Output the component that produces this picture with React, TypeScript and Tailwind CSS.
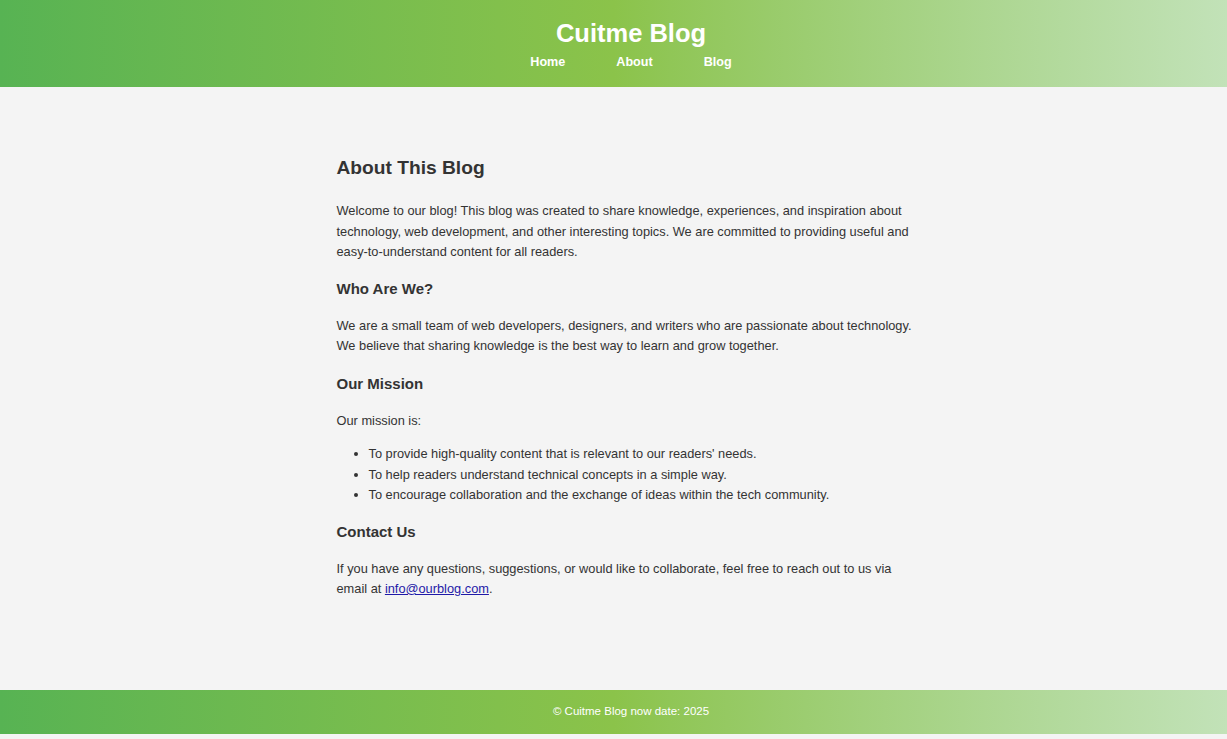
export default function App() {
  return (
    <div className="min-h-[739px] bg-[#f4f4f4] text-[#333] font-['Liberation_Sans',Arial,sans-serif]">
      {/* Header */}
      <header className="h-[87px] bg-linear-to-r from-[#57b353] via-[#8bc34a] to-[#c2e2b8] text-white flex flex-col items-center pt-[17px] pl-[35px]">
        <h1 className="text-[25.5px] font-bold leading-[32px]">Cuitme Blog</h1>
        <nav className="flex gap-[51px] mt-[5px] text-[12.6px] font-bold leading-[16px]">
          <a href="#">Home</a>
          <a href="#">About</a>
          <a href="#">Blog</a>
        </nav>
      </header>

      {/* Content */}
      <main className="w-[606px] mx-auto pl-[26px] pt-[67px] pb-[90px] text-[12.8px] leading-[20.5px]">
        <h2 className="text-[19.2px] font-bold leading-[28px]">About This Blog</h2>
        <p className="mt-[19px]">
          Welcome to our blog! This blog was created to share knowledge, experiences, and inspiration about
          technology, web development, and other interesting topics. We are committed to providing useful and
          easy-to-understand content for all readers.
        </p>

        <h3 className="mt-[16px] text-[15px] font-bold leading-[20px]">Who Are We?</h3>
        <p className="mt-[17px]">
          We are a small team of web developers, designers, and writers who are passionate about technology.
          We believe that sharing knowledge is the best way to learn and grow together.
        </p>

        <h3 className="mt-[17px] text-[15px] font-bold leading-[20px]">Our Mission</h3>
        <p className="mt-[17px]">Our mission is:</p>
        <ul className="mt-[13px] list-disc pl-[32px]">
          <li>To provide high-quality content that is relevant to our readers' needs.</li>
          <li>To help readers understand technical concepts in a simple way.</li>
          <li>To encourage collaboration and the exchange of ideas within the tech community.</li>
        </ul>

        <h3 className="mt-[16px] text-[15px] font-bold leading-[20px]">Contact Us</h3>
        <p className="mt-[17px]">
          If you have any questions, suggestions, or would like to collaborate, feel free to reach out to us via
          email at{" "}
          <a href="#" className="text-[#1f1aa8] underline">
            info@ourblog.com
          </a>
          .
        </p>
      </main>

      {/* Footer */}
      <footer className="h-[44px] bg-linear-to-r from-[#57b353] via-[#8bc34a] to-[#c2e2b8] text-white text-[11.5px] flex items-center justify-center pl-[35px]">
        © Cuitme Blog now date: 2025
      </footer>
    </div>
  );
}
